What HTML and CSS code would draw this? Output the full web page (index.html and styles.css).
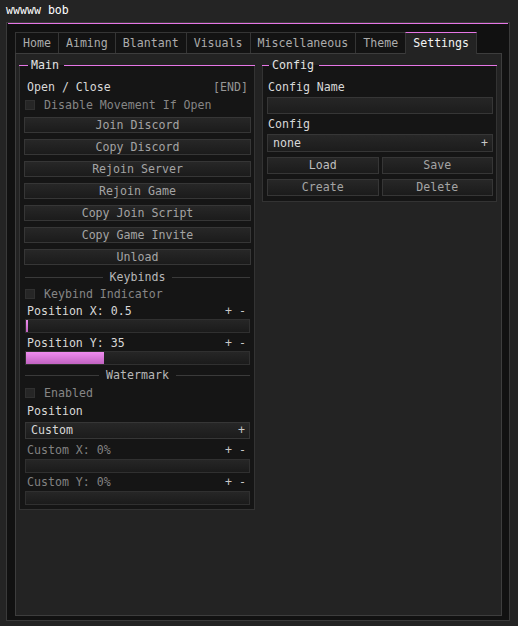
FILE: index.html
```html
<!DOCTYPE html>
<html>
<head>
<meta charset="utf-8">
<link rel="stylesheet" href="styles.css">
</head>
<body>
<div class="title">wwwww bob</div>
<div class="window">
  <div class="accent"></div>
  <div class="tabs">
    <div class="tab">Home</div>
    <div class="tab">Aiming</div>
    <div class="tab">Blantant</div>
    <div class="tab">Visuals</div>
    <div class="tab">Miscellaneous</div>
    <div class="tab">Theme</div>
    <div class="tab active">Settings</div>
  </div>
  <div class="content">
    <div class="grid">
      <div class="panel main">
        <div class="phead"><span class="pl short"></span><span class="ptitle">Main</span><span class="pl"></span></div>
        <div class="row first"><span>Open / Close</span><span class="dim">[END]</span></div>
        <div class="check m4"><span class="box"></span><span>Disable Movement If Open</span></div>
        <div class="btn m5">Join Discord</div>
        <div class="btn m6">Copy Discord</div>
        <div class="btn m6">Rejoin Server</div>
        <div class="btn m6">Rejoin Game</div>
        <div class="btn m6">Copy Join Script</div>
        <div class="btn m6">Copy Game Invite</div>
        <div class="btn m6">Unload</div>
        <div class="sep m5"><span class="ln"></span><span class="st">Keybinds</span><span class="ln"></span></div>
        <div class="check m3"><span class="box"></span><span>Keybind Indicator</span></div>
        <div class="row m3 bright"><span>Position X: 0.5</span><span class="pm">+ -</span></div>
        <div class="slider m1"><div class="fill" style="width:2px"></div></div>
        <div class="row m3 bright"><span>Position Y: 35</span><span class="pm">+ -</span></div>
        <div class="slider m1"><div class="fill" style="width:78px"></div></div>
        <div class="sep m3"><span class="ln"></span><span class="st">Watermark</span><span class="ln"></span></div>
        <div class="check m4"><span class="box"></span><span>Enabled</span></div>
        <div class="row m4 bright"><span>Position</span></div>
        <div class="drop m4"><span>Custom</span><span class="plus">+</span></div>
        <div class="row m4 grey"><span>Custom X: 0%</span><span class="pm">+ -</span></div>
        <div class="slider m2"></div>
        <div class="row m2 grey"><span>Custom Y: 0%</span><span class="pm">+ -</span></div>
        <div class="slider m2"></div>
      </div>
      <div class="panel cfg">
        <div class="phead"><span class="pl short2"></span><span class="ptitle">Config</span><span class="pl"></span></div>
        <div class="row first bright lab"><span>Config Name</span></div>
        <div class="input m3"></div>
        <div class="row m3 bright lab"><span>Config</span></div>
        <div class="drop m3 tall"><span>none</span><span class="plus">+</span></div>
        <div class="pair m5"><div class="btn b2 light">Load</div><div class="btn b2">Save</div></div>
        <div class="pair m5"><div class="btn b2">Create</div><div class="btn b2">Delete</div></div>
      </div>
    </div>
  </div>
</div>
</body>
</html>
```

FILE: styles.css
```css
html, body {
  margin: 0;
  padding: 0;
}
body {
  width: 518px;
  height: 626px;
  overflow: hidden;
  background: #242424;
  font-family: "DejaVu Sans Mono", "Liberation Mono", monospace;
  font-size: 11.6px;
  color: #d6d6d6;
}
.title {
  height: 22px;
  line-height: 21px;
  padding-left: 6px;
  color: #ffffff;
}
.window {
  box-sizing: border-box;
  height: 599px;
  margin: 0 8px 0 6px;
  border: 1px solid #3a3a3a;
  background: #111111;
  padding: 0 1px;
  display: flex;
  flex-direction: column;
}
.accent {
  height: 1px;
  background: #e676e6;
  flex: none;
}
.tabs {
  display: flex;
  margin: 8px 0 0 7px;
  height: 21px;
  flex: none;
  position: relative;
  z-index: 1;
}
.tab {
  box-sizing: border-box;
  height: 21px;
  line-height: 20px;
  padding: 0 7px;
  border: 1px solid #353535;
  border-bottom: none;
  border-right: none;
  background: #131313;
  color: #acacac;
}
.tab.active {
  border-right: 1px solid #353535;
  border-top: 1px solid #e676e6;
  background: #232323;
  color: #f4f4f4;
  height: 22px;
}
.content {
  flex: 1;
  margin: 0 6px 4px 7px;
  border: 1px solid #3d3d3d;
  background: #232323;
}
.grid {
  display: grid;
  grid-template-columns: 236px 235px;
  column-gap: 7px;
  align-items: start;
  padding: 11px 0 0 3px;
}
.panel {
  border: 1px solid #333333;
  border-top: none;
  background: #151515;
  display: flex;
  flex-direction: column;
}
.main {
  padding: 0 4px 4px 5px;
}
.cfg {
  padding: 0 3px 5px 4px;
}
.phead {
  height: 15px;
  display: flex;
  align-items: center;
  margin: -7px -5px 0 -6px;
  color: #e4e4e4;
}
.cfg .phead {
  margin: -7px -4px 0 -5px;
}
.pl {
  flex: 1;
  height: 1px;
  background: #e676e6;
}
.pl.short {
  flex: none;
  width: 9px;
}
.pl.short2 {
  flex: none;
  width: 7px;
}
.ptitle {
  padding: 0 5px 0 3px;
  line-height: 15px;
}
.row {
  height: 14px;
  line-height: 14px;
  display: flex;
  justify-content: space-between;
  padding: 0 2px;
  color: #d8d8d8;
}
.row.first {
  margin-top: 7px;
}
.lab {
  padding-left: 1px;
}
.dim {
  color: #969696;
}
.grey {
  color: #828282;
}
.pm {
  color: #c8c8c8;
  padding-right: 2px;
}
.m1 { margin-top: 1px; }
.m2 { margin-top: 2px; }
.m3 { margin-top: 3px; }
.m4 { margin-top: 4px; }
.m5 { margin-top: 5px; }
.m6 { margin-top: 6px; }
.check {
  height: 14px;
  line-height: 14px;
  display: flex;
  align-items: center;
  color: #868686;
}
.box {
  box-sizing: border-box;
  width: 10px;
  height: 10px;
  margin-right: 9px;
  background: #262626;
  border: 1px solid #303030;
}
.btn {
  box-sizing: border-box;
  height: 16px;
  line-height: 14px;
  margin-left: -1px;
  margin-right: -1px;
  text-align: center;
  border: 1px solid #363636;
  background: linear-gradient(#272727, #1b1b1b);
  color: #a4a4a4;
}
.sep {
  height: 14px;
  display: flex;
  align-items: center;
}
.ln {
  flex: 1;
  height: 1px;
  background: #3a3a3a;
}
.st {
  padding: 0 7px;
  line-height: 14px;
  color: #b8b8b8;
}
.slider {
  box-sizing: border-box;
  height: 14px;
  border: 1px solid #303030;
  background: linear-gradient(#262626, #1b1b1b);
  display: flex;
}
.fill {
  height: 100%;
  background: linear-gradient(#f08cf0, #c062c0);
}
.drop {
  box-sizing: border-box;
  height: 17px;
  line-height: 15px;
  display: flex;
  justify-content: space-between;
  padding: 0 4px 0 5px;
  border: 1px solid #363636;
  background: linear-gradient(#272727, #1c1c1c);
  color: #d8d8d8;
}
.drop.tall {
  height: 18px;
  line-height: 16px;
}
.plus {
  color: #c8c8c8;
}
.input {
  box-sizing: border-box;
  height: 17px;
  border: 1px solid #363636;
  background: linear-gradient(#262626, #1d1d1d);
}
.pair {
  display: grid;
  grid-template-columns: 1fr 1fr;
  column-gap: 3px;
}
.btn.b2 {
  margin: 0;
  height: 17px;
  line-height: 15px;
}
.btn.light {
  color: #bebebe;
}
```
